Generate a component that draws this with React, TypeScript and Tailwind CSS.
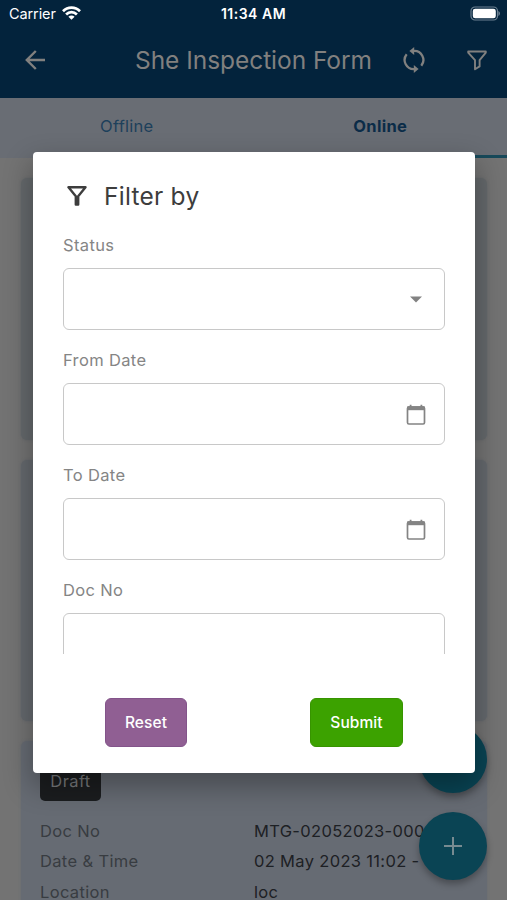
import React from "react";

function FilterOutlineIcon({ className }: { className?: string }) {
  return (
    <svg width="20" height="21" viewBox="0 0 20 21" fill="none" stroke="currentColor" className={className}>
      <path d="M1.2 1.5H18.8V2.6L12.6 10.2V16.4L8 19.2V10.2L1.2 2.6Z" strokeWidth="1.9" strokeLinejoin="round" />
    </svg>
  );
}

function FilterBoldIcon() {
  return (
    <svg width="20" height="20" viewBox="0 0 20 20" fill="none" stroke="currentColor">
      <path d="M1.5 1.3H18.5L11.2 10.2V18.5H8.8V10.2Z" strokeWidth="2.4" strokeLinejoin="round" />
    </svg>
  );
}

function SyncIcon({ className }: { className?: string }) {
  return (
    <svg className={className} width="24" height="28" viewBox="0 0 24 28" fill="none" stroke="currentColor" strokeWidth="2.3">
      <path d="M4.7 8.3A9.1 9.1 0 0 0 12.5 23.1" />
      <path d="M19.3 19.7A9.1 9.1 0 0 0 11.5 4.9" />
      <path d="M7.4 5L12.2 1V9Z" fill="currentColor" stroke="none" />
      <path d="M16.6 23L11.8 27V19Z" fill="currentColor" stroke="none" />
    </svg>
  );
}

function StatusBar() {
  return (
    <div className="grid h-7 grid-cols-3 items-center pl-[9px] pr-[7px] text-white">
      <div className="flex items-center gap-[6px] text-[14.5px] tracking-[-0.1px]">
        Carrier
        <svg className="mb-[2px]" width="19" height="14" viewBox="0 0 19 14" fill="none" stroke="white" strokeWidth="2.7">
          <path d="M1 5.2C5.8 0.3 13.2 0.3 18 5.2" />
          <path d="M4.1 8.5C7.2 5.4 11.8 5.4 14.9 8.5" />
          <path d="M9.5 13.8L6.4 10.8C8.2 9.2 10.8 9.2 12.6 10.8Z" fill="white" stroke="none" />
        </svg>
      </div>
      <div className="-ml-[2px] whitespace-nowrap pb-px text-center text-[14px] font-semibold tracking-[0.5px]">11:34 AM</div>
      <svg className="mb-[2px] justify-self-end" width="31" height="15" viewBox="0 0 31 15">
        <rect x="2" y="1" width="26.5" height="13" rx="4" fill="none" stroke="#6c8091" strokeWidth="1.2" />
        <rect x="3.8" y="2.7" width="23" height="9.6" rx="2.4" fill="white" />
        <path d="M29.4 5V10Q31 9.2 31 7.5T29.4 5Z" fill="#6c8091" />
      </svg>
    </div>
  );
}

function Header() {
  return (
    <header className="h-[98px] shrink-0 bg-[#03233c]">
      <StatusBar />
      <div className="flex h-16 items-center pl-6 pr-[20px] text-[#81807f]">
        <svg width="24" height="24" viewBox="0 0 24 24" fill="none" stroke="currentColor" strokeWidth="2.4">
          <path d="M21 12H3.2M11.8 3L2.8 12L11.8 21" />
        </svg>
        <h1 className="ml-[87px] w-[238px] whitespace-nowrap text-[24.5px] leading-8 tracking-[-0.05px]">She Inspection Form</h1>
        <SyncIcon className="ml-[29px]" />
        <FilterOutlineIcon className="ml-auto" />
      </div>
    </header>
  );
}

function Tabs() {
  return (
    <nav className="grid h-[60px] shrink-0 grid-cols-2 bg-[#696d74] text-center text-[16.5px] leading-[57px]">
      <div className="tracking-[0.25px] text-[#1d405b]">Offline</div>
      <div className="border-b-[3px] border-[#17495a] font-bold tracking-[0.3px] text-[#0b2c48]">Online</div>
    </nav>
  );
}

const details = [
  ["Doc No", "MTG-02052023-000"],
  ["Date & Time", "02 May 2023 11:02 -"],
  ["Location", "loc"],
];

function Records() {
  return (
    <main className="flex flex-col gap-5 bg-[#737373] pl-[21px] pr-5 pt-5">
      <section className="h-[262px] shrink-0 rounded-md bg-[#65696c] shadow-[0_0_3px_#65696c]" />
      <section className="h-[261px] shrink-0 rounded-md bg-[#65696e] shadow-[0_0_3px_#65696e]" />
      <section className="h-[261px] shrink-0 rounded-md bg-[#666b73] px-[19px] pt-5 shadow-[0_0_3px_#666b73]">
        <div className="flex h-10 w-[61px] items-center justify-center rounded-[5px] bg-[#1b1d1f] text-[16.5px] tracking-[0.4px] text-[#77797b]">
          Draft
        </div>
        <dl className="mt-[15px]">
          {details.map(([label, value]) => (
            <div key={label} className="grid h-[30.5px] grid-cols-2 items-center whitespace-nowrap text-[16.5px]">
              <dt className="tracking-[0.35px] text-[#383c41]">{label}</dt>
              <dd className="tracking-[0.33px] text-[#1d2024]">{value}</dd>
            </div>
          ))}
        </dl>
      </section>
    </main>
  );
}

function FloatingButtons() {
  return (
    <div className="absolute right-5 top-[725px] flex flex-col gap-[19px]">
      <button className="size-[68px] rounded-full bg-[#094454] shadow-[0_4px_7px_rgba(0,0,0,0.3)]" aria-label="Records" />
      <button
        className="flex size-[68px] items-center justify-center rounded-full bg-[#0a4454] text-[#778b91] shadow-[0_4px_7px_rgba(0,0,0,0.3)]"
        aria-label="Add"
      >
        <svg width="18" height="18" viewBox="0 0 18 18" stroke="currentColor" strokeWidth="2">
          <path d="M9 0V18M0 9H18" />
        </svg>
      </button>
    </div>
  );
}

function CalendarIcon() {
  return (
    <svg className="mt-[1px]" width="20" height="22" viewBox="0 0 20 22" fill="none" stroke="#848484" strokeWidth="1.7">
      <rect x="1.5" y="3" width="17" height="17" rx="1.4" />
      <path d="M1.4 4.2H18.6" strokeWidth="4" />
      <path d="M4.6 0.8V4M15.4 0.8V4" strokeWidth="1.8" />
    </svg>
  );
}

function Field({ label, icon }: { label: string; icon?: React.ReactNode }) {
  return (
    <div className="flex h-[115px] shrink-0 flex-col">
      <label className="h-[34px] text-[16.5px] leading-[22px] tracking-[0.35px] text-[#858585]">{label}</label>
      <div className="flex h-[62px] items-center justify-end rounded-md border-[1.5px] border-[#c8c8c8] pr-[18px]">{icon}</div>
    </div>
  );
}

function FilterDialog() {
  return (
    <div
      role="dialog"
      className="absolute left-[33px] top-[152px] flex h-[621px] w-[442px] flex-col rounded-[4px] bg-white px-[30px] shadow-[0_12px_28px_2px_rgba(0,0,0,0.3)]"
    >
      <div className="flex h-[82px] shrink-0 items-center pl-[4px] pt-[6px] text-[#3d3d3d]">
        <FilterBoldIcon />
        <h2 className="ml-[17px] text-[24.5px] leading-8 tracking-[0.25px]">Filter by</h2>
      </div>
      <div className="flex h-[420px] shrink-0 flex-col overflow-hidden">
        <Field
          label="Status"
          icon={
            <svg className="mr-[4px] mt-px" width="12" height="7" viewBox="0 0 12 7" fill="#828282">
              <path d="M0 0.5H12L6 6.5Z" />
            </svg>
          }
        />
        <Field label="From Date" icon={<CalendarIcon />} />
        <Field label="To Date" icon={<CalendarIcon />} />
        <Field label="Doc No" />
      </div>
      <div className="mt-[44px] flex justify-between px-[42px] text-[15.5px] font-medium tracking-[0.1px] text-white">
        <button className="h-[49px] w-[82px] rounded-md border border-[#83548a] bg-[#905f93]">Reset</button>
        <button className="h-[49px] w-[93px] rounded-md border border-[#379400] bg-[#3ca200]">Submit</button>
      </div>
    </div>
  );
}

export default function App() {
  return (
    <div className="relative flex h-[900px] w-[507px] flex-col overflow-hidden bg-[#737373] font-['Inter','Liberation_Sans',sans-serif]">
      <Header />
      <Tabs />
      <Records />
      <FloatingButtons />
      <FilterDialog />
    </div>
  );
}
